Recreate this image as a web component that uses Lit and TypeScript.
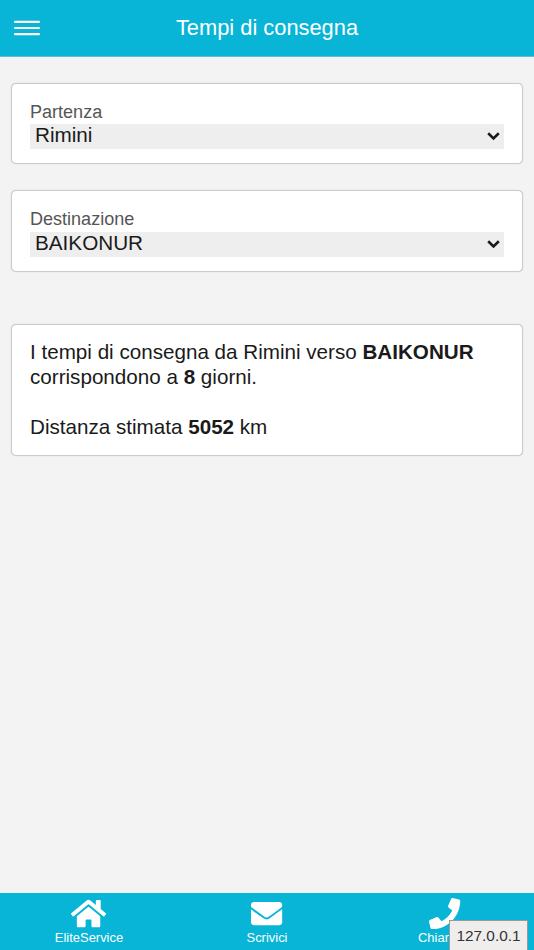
import { LitElement, html, css, svg } from "lit";
import { customElement, property } from "lit/decorators.js";

const ICONS = {
  home: {
    box: "0 0 576 512",
    d: "M280.37 148.26L96 300.11V464a16 16 0 0 0 16 16l112.06-.29a16 16 0 0 0 15.92-16V368a16 16 0 0 1 16-16h64a16 16 0 0 1 16 16v95.64a16 16 0 0 0 16 16.05L464 480a16 16 0 0 0 16-16V300L295.67 148.26a12.19 12.19 0 0 0-15.3 0zM571.6 251.47L488 182.56V44.05a12 12 0 0 0-12-12h-56a12 12 0 0 0-12 12v72.61L318.47 43a48 48 0 0 0-61 0L4.34 251.47a12 12 0 0 0-1.6 16.9l25.5 31A12 12 0 0 0 45.15 301l235.22-193.74a12.19 12.19 0 0 1 15.3 0L530.9 301a12 12 0 0 0 16.9-1.6l25.5-31a12 12 0 0 0-1.7-16.93z",
  },
  mail: {
    box: "0 0 512 512",
    d: "M502.3 190.8c3.9-3.1 9.7-.2 9.7 4.7V400c0 26.5-21.5 48-48 48H48c-26.5 0-48-21.5-48-48V195.6c0-5 5.7-7.8 9.7-4.7 22.4 17.4 52.1 39.5 154.1 113.6 21.1 15.4 56.7 47.8 92.2 47.6 35.7.3 72-32.8 92.3-47.6 102-74.1 131.6-96.3 154-113.7zM256 320c23.2.4 56.6-29.2 73.4-41.4 132.7-96.3 142.8-104.7 173.4-128.7 5.8-4.5 9.2-11.5 9.2-18.9v-19c0-26.5-21.5-48-48-48H48c-26.5 0-48 21.5-48 48v19c0 7.4 3.4 14.3 9.2 18.9 30.6 23.9 40.7 32.4 173.4 128.7 16.8 12.2 50.2 41.8 73.4 41.4z",
  },
  phone: {
    box: "0 0 512 512",
    d: "M493.4 24.6l-104-24c-11.3-2.6-22.9 3.3-27.5 13.9l-48 112c-4.2 9.8-1.4 21.3 6.9 28l60.6 49.6c-36 76.7-98.9 140.5-177.2 177.2l-49.6-60.6c-6.8-8.3-18.2-11.1-28-6.9l-112 48C3.9 366.5-2 378.1.6 389.4l24 104C27.1 504.2 36.7 512 48 512c256.1 0 464-207.5 464-464 0-11.2-7.7-20.9-18.6-23.4z",
  },
};

@customElement("select-card")
class SelectCard extends LitElement {
  @property() label = "";
  @property() value = "";

  static styles = css`
    :host {
      display: block;
      box-sizing: border-box;
      padding: 17px 18px 14px;
      background: #fff;
      border: 1px solid #ccc;
      border-radius: 5px;
      box-shadow: 0 0 1px #bbb;
    }
    .label {
      color: #555;
      font-size: 18.05px;
      line-height: 22px;
    }
    .field {
      display: flex;
      align-items: center;
      justify-content: space-between;
      box-sizing: border-box;
      height: 24.6px;
      margin-top: var(--gap, 1px);
      padding: 0 4px 0 5px;
      background: #eee;
      font-size: 20.7px;
      line-height: 23px;
    }
    .value {
      margin-bottom: 3px;
    }
    .arrow {
      width: 13px;
      height: 9px;
      fill: none;
      stroke: #1a1a1a;
      stroke-width: 2.6;
    }
  `;

  render() {
    return html`
      <div class="label">${this.label}</div>
      <div class="field">
        <span class="value">${this.value}</span>
        <svg class="arrow" viewBox="0 0 13 9"><path d="M1.2 1.2L6.5 6.4L11.8 1.2" /></svg>
      </div>
    `;
  }
}

@customElement("app-root")
class AppRoot extends LitElement {
  static styles = css`
    :host {
      display: flex;
      flex-direction: column;
      position: relative;
      box-sizing: border-box;
      height: 100vh;
      overflow: hidden;
      background: #f3f3f3;
      color: #1a1a1a;
      font-family: "Liberation Sans", Arial, sans-serif;
    }
    header {
      display: grid;
      grid-template-columns: 40px 1fr 40px;
      align-items: center;
      flex: none;
      box-sizing: border-box;
      height: 57px;
      background: #08b5d6;
      border-bottom: 1px solid #64bdce;
      color: #fff;
    }
    .menu {
      display: block;
      width: 26px;
      height: 17px;
      margin-left: 14px;
      fill: #fff;
    }
    h1 {
      margin: 0;
      font-size: 21.85px;
      font-weight: 400;
      line-height: 26px;
      text-align: center;
    }
    main {
      flex: 1;
      padding: 26px 11px 0;
    }
    .from {
      height: 81px;
    }
    .to {
      height: 82px;
      margin-top: 26px;
      --gap: 2px;
    }
    .result {
      box-sizing: border-box;
      height: 132px;
      margin-top: 52px;
      padding: 14px 18px;
      background: #fff;
      border: 1px solid #ccc;
      border-radius: 5px;
      box-shadow: 0 0 1px #bbb;
      font-size: 20.63px;
      line-height: 25px;
    }
    .result p {
      margin: 0 0 25px;
    }
    footer {
      display: grid;
      grid-template-columns: repeat(3, 1fr);
      flex: none;
      height: 57px;
      box-sizing: border-box;
      padding-top: 5px;
      background: #08b5d6;
      color: #fff;
    }
    .tab {
      display: flex;
      flex-direction: column;
      align-items: center;
      font-size: 12.95px;
      line-height: 15px;
    }
    .tab svg {
      height: 31.2px;
      margin-bottom: 1px;
      fill: #fff;
    }
    .status {
      position: absolute;
      right: 6px;
      bottom: 0;
      box-sizing: border-box;
      width: 79px;
      height: 30px;
      border: 1px solid #999;
      border-bottom: 0;
      background: #f0eded;
      color: #333;
      font-size: 15.4px;
      line-height: 29px;
      text-align: center;
    }
  `;

  private tab(icon: keyof typeof ICONS, label: string) {
    return html`
      <div class="tab">
        <svg viewBox=${ICONS[icon].box}>${svg`<path d=${ICONS[icon].d} />`}</svg>
        <span>${label}</span>
      </div>
    `;
  }

  render() {
    return html`
      <header>
        <svg class="menu" viewBox="0 0 26 17">
          <rect y="0.8" width="26" height="2.2" rx="1" />
          <rect y="6.9" width="26" height="2.2" rx="1" />
          <rect y="13.1" width="26" height="2.2" rx="1" />
        </svg>
        <h1>Tempi di consegna</h1>
      </header>
      <main>
        <select-card class="from" label="Partenza" value="Rimini"></select-card>
        <select-card class="to" label="Destinazione" value="BAIKONUR"></select-card>
        <section class="result">
          <p>I tempi di consegna da Rimini verso <b>BAIKONUR</b> corrispondono a <b>8</b> giorni.</p>
          <p>Distanza stimata <b>5052</b> km</p>
        </section>
      </main>
      <footer>
        ${this.tab("home", "EliteService")} ${this.tab("mail", "Scrivici")}
        ${this.tab("phone", "Chiamaci")}
      </footer>
      <div class="status">127.0.0.1</div>
    `;
  }
}
